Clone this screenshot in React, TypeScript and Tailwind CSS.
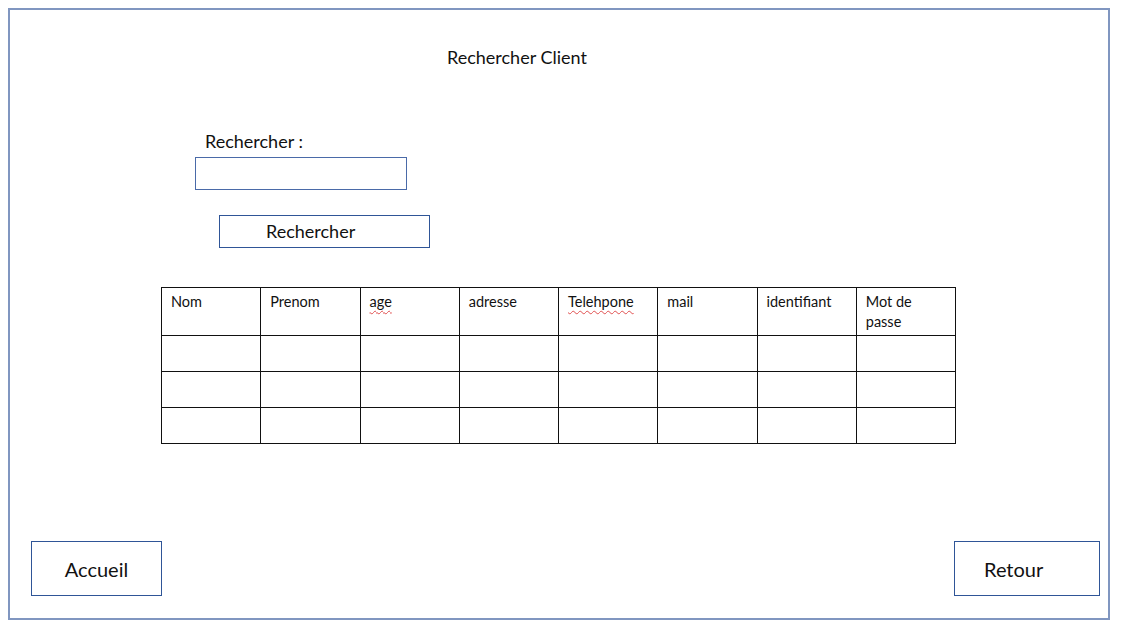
import React from "react";

const headers = ["Nom", "Prenom", "age", "adresse", "Telehpone", "mail", "identifiant", "Mot de passe"];

export default function App() {
  const font = { fontFamily: "Lato, 'Open Sans', sans-serif" };
  return (
    <div className="w-[1126px] h-[637px] bg-white pt-[8px] pl-[8px]" style={font}>
      <div className="w-[1102px] h-[612px] border-2 border-[#8096c0] flex flex-col">
        <div className="mt-[35px] pl-[437px] text-[18px] leading-[24px] text-[#111]">Rechercher Client</div>
        <div className="mt-[60px] pl-[195px] text-[18px] leading-[24px] text-[#111]">Rechercher :</div>
        <div className="ml-[185px] mt-[4px] w-[212px] h-[33px] border border-[#4a6aa8]"></div>
        <div className="ml-[209px] mt-[25px] w-[211px] h-[33px] border border-[#2f5597] flex items-center pl-[46px] text-[18px] text-[#111]">
          Rechercher
        </div>
        <table className="ml-[151px] mt-[39px] w-[795px] table-fixed border-collapse">
          <thead>
            <tr className="h-[48px]">
              {headers.map((h) => (
                <th
                  key={h}
                  className="border border-[#111] align-top text-left font-normal text-[14.5px] leading-[20px] pt-[4px] pl-[9px] pr-[16px] text-[#111]"
                >
                  {h === "age" || h === "Telehpone" ? (
                    <span className="underline decoration-wavy decoration-[#e05050] decoration-1 underline-offset-[3px]">{h}</span>
                  ) : (
                    h
                  )}
                </th>
              ))}
            </tr>
          </thead>
          <tbody>
            {[0, 1, 2].map((r) => (
              <tr key={r} className="h-[36px]">
                {headers.map((h) => (
                  <td key={h} className="border border-[#111]"></td>
                ))}
              </tr>
            ))}
          </tbody>
        </table>
        <div className="mt-auto mb-[22px] flex justify-between pl-[21px] pr-[8px]">
          <div className="w-[131px] h-[55px] border border-[#2f5597] flex items-center justify-center text-[20px] text-[#111]">
            Accueil
          </div>
          <div className="w-[146px] h-[55px] border border-[#2f5597] flex items-center pl-[29px] text-[20px] text-[#111]">
            Retour
          </div>
        </div>
      </div>
    </div>
  );
}
